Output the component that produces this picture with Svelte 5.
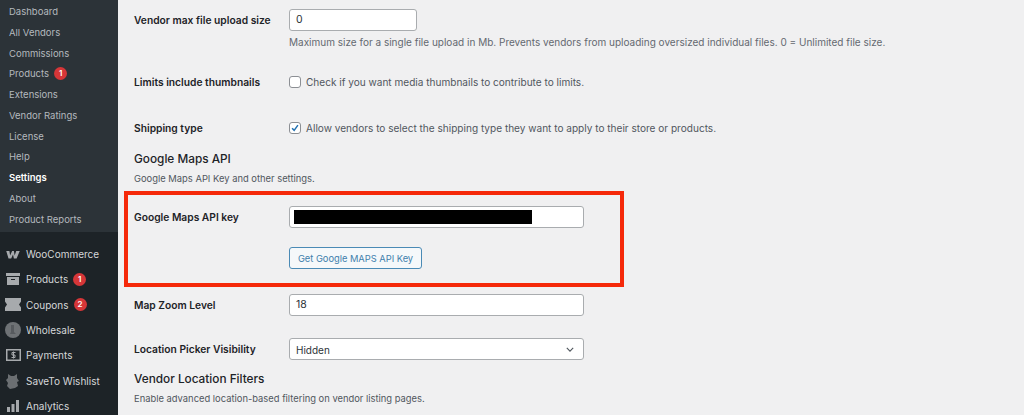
<script>
  const submenu = [
    { label: "Dashboard" },
    { label: "All Vendors" },
    { label: "Commissions" },
    { label: "Products", badge: 1 },
    { label: "Extensions" },
    { label: "Vendor Ratings" },
    { label: "License" },
    { label: "Help" },
    { label: "Settings", active: true },
    { label: "About" },
    { label: "Product Reports" },
  ];

  const menu = [
    { label: "WooCommerce", icon: "woo" },
    { label: "Products", icon: "box", badge: 1 },
    { label: "Coupons", icon: "coupon", badge: 2 },
    { label: "Wholesale", icon: "wholesale" },
    { label: "Payments", icon: "pay" },
    { label: "SaveTo Wishlist", icon: "squirrel" },
    { label: "Analytics", icon: "chart" },
  ];
</script>

<div class="page">
  <aside class="sidebar">
    <ul class="submenu">
      {#each submenu as item}
        <li class:active={item.active}>
          {item.label}
          {#if item.badge}<span class="badge">{item.badge}</span>{/if}
        </li>
      {/each}
    </ul>
    <ul class="menu">
      {#each menu as item}
        <li>
          <span class="icon">
            {#if item.icon === "woo"}
              <svg width="16" height="9" viewBox="0 0 16 10"><path d="M0.5 1H4L4.8 6L7 1H9L9.8 6L11.6 1H15.5L12 9.5H9L8 5L6 9.5H3Z" fill="#a7aaad"/></svg>
            {:else if item.icon === "box"}
              <svg width="14" height="12" viewBox="0 0 14 12"><path d="M0 0H14V3H0Z M1 4H13V12H1Z" fill="#a7aaad"/><path d="M5 6H9V7H5Z" fill="#1d2327"/></svg>
            {:else if item.icon === "coupon"}
              <svg width="16" height="13" viewBox="0 0 16 13"><path d="M0 0H16V3.5L14 6.5L16 9.5V13H0V9.5L2 6.5L0 3.5Z" fill="#a7aaad"/></svg>
            {:else if item.icon === "wholesale"}
              <svg width="16" height="16" viewBox="0 0 16 16"><circle cx="8" cy="8" r="8" fill="#6e7275"/><path d="M6 3H9V10L11 12H5L6 10Z" fill="#565a5e"/></svg>
            {:else if item.icon === "pay"}
              <svg width="15" height="12" viewBox="0 0 15 12"><rect x="0.75" y="0.75" width="13.5" height="10.5" fill="none" stroke="#a7aaad" stroke-width="1.5"/><path d="M9.5 3.5H6V6H9V8.5H5.5M7.5 2.5V9.5" fill="none" stroke="#a7aaad"/></svg>
            {:else if item.icon === "squirrel"}
              <svg width="16" height="16" viewBox="0 0 16 16"><path d="M3 1L6 3L9 3L12 1L12 5L14 8L12 9L13 13L10 15L5 16L2 13L3 10L1 7L3 5Z" fill="#6b6f72"/></svg>
            {:else}
              <svg width="12" height="12" viewBox="0 0 12 12"><path d="M0 7H3V12H0Z M4.5 4H7.5V12H4.5Z M9 0H12V12H9Z" fill="#a7aaad"/></svg>
            {/if}
          </span>
          {item.label}
          {#if item.badge}<span class="badge">{item.badge}</span>{/if}
        </li>
      {/each}
    </ul>
  </aside>

  <main class="content">
    <div class="row upload">
      <span class="label">Vendor max file upload size</span>
      <div class="field">
        <div class="input short">0</div>
        <p class="desc">Maximum size for a single file upload in Mb. Prevents vendors from uploading oversized individual files. 0 = Unlimited file size.</p>
      </div>
    </div>

    <div class="row limits">
      <span class="label">Limits include thumbnails</span>
      <div class="check-line"><span class="check"></span>Check if you want media thumbnails to contribute to limits.</div>
    </div>

    <div class="row shipping">
      <span class="label">Shipping type</span>
      <div class="check-line">
        <span class="check">
          <svg width="12" height="12" viewBox="0 0 12 12"><path d="M2.5 6.2L5 8.8L9.5 2.5" fill="none" stroke="#2271b1" stroke-width="1.8"/></svg>
        </span>
        Allow vendors to select the shipping type they want to apply to their store or products.
      </div>
    </div>

    <h2 class="maps-title">Google Maps API</h2>
    <p class="section-desc">Google Maps API Key and other settings.</p>

    <div class="highlight">
      <div class="row">
        <span class="label">Google Maps API key</span>
        <div class="field">
          <div class="input wide"><span class="redacted"></span></div>
          <button class="btn">Get Google MAPS API Key</button>
        </div>
      </div>
    </div>

    <div class="row zoom">
      <span class="label">Map Zoom Level</span>
      <div class="input wide">18</div>
    </div>

    <div class="row picker">
      <span class="label">Location Picker Visibility</span>
      <div class="input wide select">
        Hidden
        <svg width="8" height="5" viewBox="0 0 10 6"><path d="M1 1L5 5L9 1" fill="none" stroke="#50575e" stroke-width="1.4"/></svg>
      </div>
    </div>

    <h2 class="filters-title">Vendor Location Filters</h2>
    <p class="section-desc">Enable advanced location-based filtering on vendor listing pages.</p>
  </main>
</div>

<style>
  :global(body) {
    margin: 0;
    background: #f0f0f1;
  }

  .page {
    display: flex;
    height: 415px;
    overflow: hidden;
    font-family: Inter, "Liberation Sans", sans-serif;
    font-size: 11px;
    color: #3c434a;
  }

  .sidebar {
    width: 118px;
    flex-shrink: 0;
    display: flex;
    flex-direction: column;
    background: #1d2327;
    color: #c3c4c7;
  }

  ul {
    list-style: none;
    margin: 0;
    padding: 0;
  }

  .submenu {
    box-sizing: border-box;
    background: #2c3338;
    height: 232px;
    flex-shrink: 0;
    padding-top: 1px;
    font-size: 9.5px;
  }

  .submenu li {
    height: 20.8px;
    line-height: 21px;
    padding-left: 9px;
    display: flex;
    align-items: center;
    gap: 5px;
    color: #b4b9be;
  }

  .submenu li.active {
    color: #fff;
    font-weight: 600;
  }

  .menu {
    padding-top: 9.5px;
    font-size: 10px;
  }

  .menu li {
    height: 25.3px;
    display: flex;
    align-items: center;
    color: #d5d7d9;
  }

  .icon {
    width: 26px;
    flex-shrink: 0;
    display: flex;
    justify-content: center;
  }

  .badge {
    width: 13px;
    height: 13px;
    border-radius: 50%;
    background: #d63638;
    color: #fff;
    font-size: 8px;
    font-weight: 600;
    line-height: 13px;
    text-align: center;
  }

  .menu .badge {
    margin-left: 5px;
  }

  .content {
    flex: 1;
    min-width: 0;
    padding-left: 16px;
    padding-top: 9px;
  }

  .row {
    display: flex;
    align-items: flex-start;
  }

  .label {
    width: 155px;
    flex-shrink: 0;
    font-weight: 600;
    color: #1d2327;
    font-size: 10.25px;
    line-height: 22px;
  }

  .field {
    display: flex;
    flex-direction: column;
    align-items: flex-start;
  }

  .input {
    box-sizing: border-box;
    height: 22px;
    line-height: 20px;
    padding: 0 6px;
    background: #fff;
    border: 1px solid #a9acaf;
    border-radius: 3px;
    color: #2c3338;
    font-size: 10.5px;
  }

  .short {
    width: 128px;
  }

  .wide {
    width: 295px;
  }

  .desc {
    margin: 5px 0 0;
    line-height: 13px;
    color: #646970;
    font-size: 10px;
    white-space: nowrap;
  }

  .limits {
    margin-top: 22px;
  }

  .shipping {
    margin-top: 24px;
  }

  .check-line {
    display: flex;
    align-items: center;
    gap: 5px;
    line-height: 22px;
    font-size: 10.07px;
    color: #50575e;
    white-space: nowrap;
  }

  .check {
    box-sizing: border-box;
    width: 12px;
    height: 12px;
    background: #fff;
    border: 1px solid #8c8f94;
    border-radius: 3px;
    display: flex;
    align-items: center;
    justify-content: center;
  }

  h2 {
    margin: 0;
    font-size: 11.8px;
    font-weight: 500;
    line-height: 16px;
    color: #1d2327;
  }

  .maps-title {
    margin-top: 12px;
  }

  .section-desc {
    margin: 5px 0 0;
    line-height: 14px;
    font-size: 9.4px;
    color: #50575e;
  }

  .highlight {
    box-sizing: border-box;
    width: 500px;
    height: 96px;
    margin: 5px 0 0 -10px;
    padding: 11px 0 0 6px;
    border: 4px solid #f5290a;
  }

  .redacted {
    display: block;
    width: 238px;
    height: 14px;
    margin: 3px 0 0 -2px;
    background: #000;
  }

  .btn {
    box-sizing: border-box;
    height: 22px;
    width: 133px;
    margin-top: 19px;
    padding: 0;
    background: #f5f8fa;
    border: 1px solid #4a8ab5;
    border-radius: 3px;
    color: #3f80ad;
    font: inherit;
    font-size: 9.3px;
  }

  .zoom {
    margin-top: 7px;
  }

  .picker {
    margin-top: 22px;
  }

  .select {
    display: flex;
    align-items: center;
    justify-content: space-between;
    padding-top: 1px;
    padding-right: 9px;
    font-size: 10px;
  }

  .filters-title {
    margin-top: 11px;
  }
</style>
